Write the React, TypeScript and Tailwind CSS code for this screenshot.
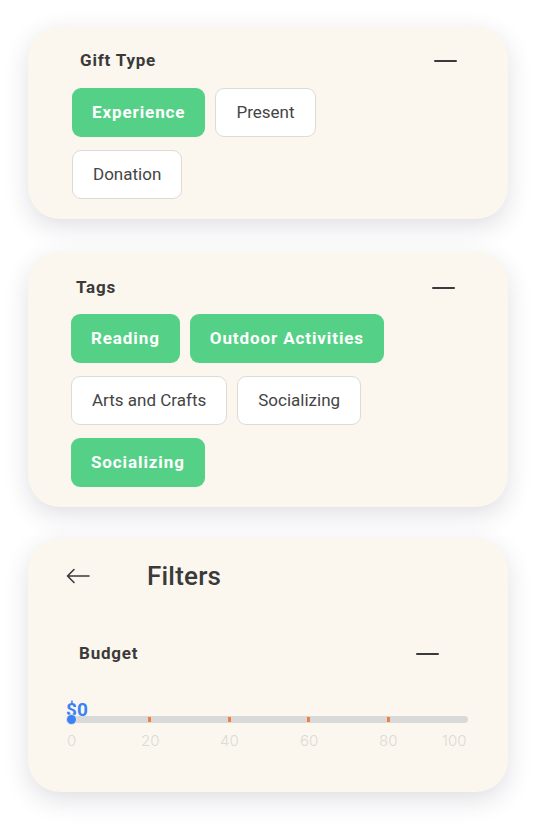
import React from "react";

const font = { fontFamily: "Roboto, 'Noto Sans', sans-serif" };

function Chip({ label, active }: { label: string; active?: boolean }) {
  return active ? (
    <div className="h-[49px] px-5 flex items-center rounded-[9px] bg-[#54d186] text-white font-bold text-[17px] tracking-[0.9px]">
      {label}
    </div>
  ) : (
    <div className="h-[49px] px-5 flex items-center rounded-[9px] bg-white border border-[#dedbd6] text-[#444] text-[17px] tracking-[0px]">
      {label}
    </div>
  );
}

function Minus() {
  return <div className="w-[23px] h-[2.5px] bg-[#3a3a3a] rounded-full" />;
}

export default function App() {
  const ticks = [20, 40, 60, 80];
  return (
    <div className="min-h-[831px] bg-white pt-[26px] pl-[28px]" style={font}>
      <div className="w-[480px] flex flex-col">
        {/* Gift Type */}
        <div className="rounded-[32px] bg-[#fbf7ee] shadow-[0_8px_24px_rgba(60,50,80,0.16)] pt-[24px] pb-[20px] pl-[44px] pr-[51px]">
          <div className="flex items-center justify-between pl-[8px] h-[22px]">
            <span className="text-[17px] font-bold text-[#3a3a3a] tracking-[0.8px]">Gift Type</span>
            <Minus />
          </div>
          <div className="mt-[16px] flex flex-wrap gap-x-[10px] gap-y-[13px] w-[340px]">
            <Chip label="Experience" active />
            <Chip label="Present" />
            <Chip label="Donation" />
          </div>
        </div>

        {/* Tags */}
        <div className="mt-[33px] rounded-[32px] bg-[#fbf7ee] shadow-[0_8px_24px_rgba(60,50,80,0.16)] pt-[25px] pb-[20px] pl-[43px] pr-[53px]">
          <div className="flex items-center justify-between pl-[5px] h-[22px]">
            <span className="text-[17px] font-bold text-[#3a3a3a] tracking-[0.8px]">Tags</span>
            <Minus />
          </div>
          <div className="mt-[15px] flex flex-wrap gap-x-[10px] gap-y-[13px] w-[340px]">
            <Chip label="Reading" active />
            <Chip label="Outdoor Activities" active />
            <Chip label="Arts and Crafts" />
            <Chip label="Socializing" />
            <Chip label="Socializing" active />
          </div>
        </div>

        {/* Filters */}
        <div className="mt-[31px] rounded-[32px] bg-[#fbf7ee] shadow-[0_8px_24px_rgba(60,50,80,0.16)] pt-[23px] pb-[40px] pl-[38px] pr-[40px]">
          <div className="flex items-center h-[30px]">
            <svg width="24" height="16" viewBox="0 0 24 16">
              <path d="M23 8H1.5M8 1.5L1.5 8L8 14.5" fill="none" stroke="#3a3a3a" strokeWidth="1.6" strokeLinecap="round" strokeLinejoin="round" />
            </svg>
            <span className="ml-[57px] text-[26px] font-medium text-[#3a3a3a] tracking-[0.2px]">Filters</span>
          </div>
          <div className="mt-[52px] flex items-center justify-between pl-[13px] pr-[29px] h-[22px]">
            <span className="text-[17px] font-bold text-[#3a3a3a] tracking-[0.8px]">Budget</span>
            <Minus />
          </div>
          <div className="mt-[33px] relative w-[402px]">
            <div className="h-[18px] text-[#3b82f6] font-bold text-[19px] leading-[18px] relative top-[3px]">$0</div>
            <div className="relative h-[7px] rounded-full bg-[#d9d9d9]">
              <div className="absolute left-[0px] top-[-2px] w-[11px] h-[11px] rounded-full bg-[#e3e3e3]" />
              <div className="absolute left-[1px] top-[-1px] w-[9px] h-[9px] rounded-full bg-[#3b82f6]" />
              {ticks.map((t, i) => (
                <div
                  key={t}
                  className="absolute top-[1px] w-[3px] h-[5px] bg-[#f0803c]"
                  style={{ left: `${82 + i * 79.5}px` }}
                />
              ))}
            </div>
            <div className="relative h-[22px] mt-[7px] text-[15px] font-light text-[#dcdad6]" style={{ fontFamily: "Inter, sans-serif" }}>
              <span className="absolute left-[1px]">0</span>
              <span className="absolute left-[75px]">20</span>
              <span className="absolute left-[154px]">40</span>
              <span className="absolute left-[234px]">60</span>
              <span className="absolute left-[313px]">80</span>
              <span className="absolute left-[376px]">100</span>
            </div>
          </div>
        </div>
      </div>
    </div>
  );
}
